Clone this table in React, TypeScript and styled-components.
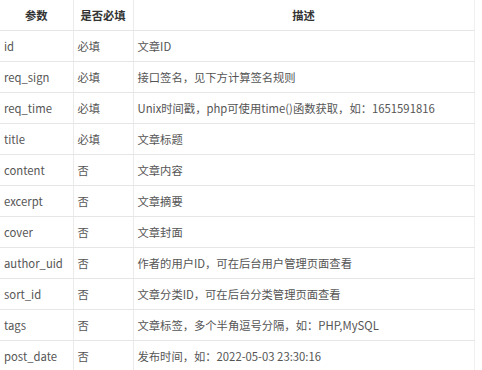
import React from "react";
import styled, { createGlobalStyle } from "styled-components";

const Global = createGlobalStyle`
  html, body { margin: 0; padding: 0; background: #fff; }
  body { font-family: "Noto Sans CJK SC", "Lato", sans-serif; }
`;

const Table = styled.table`
  border-collapse: collapse;
  width: 474px;
  table-layout: fixed;
  font-size: 11.3px;
  color: #555;
`;

const Th = styled.th<{ $w: number }>`
  width: ${(p) => p.$w}px;
  height: 30px;
  padding: 0 2px;
  box-sizing: border-box;
  font-weight: bold;
  color: #333;
  text-align: center;
  white-space: nowrap;
  border-right: 1px solid #ebebeb;
  border-bottom: 1px solid #e6e6e6;
  &:last-child { border-right: 1px solid #f0f0f0; }
`;

const Td = styled.td`
  height: 31px;
  padding: 0 4px;
  box-sizing: border-box;
  white-space: nowrap;
  border-right: 1px solid #ebebeb;
  border-bottom: 1px solid #e6e6e6;
  &:last-child { border-right: 1px solid #f0f0f0; }
`;

const rows: [string, string, string][] = [
  ["id", "必填", "文章ID"],
  ["req_sign", "必填", "接口签名，见下方计算签名规则"],
  ["req_time", "必填", "Unix时间戳，php可使用time()函数获取，如：1651591816"],
  ["title", "必填", "文章标题"],
  ["content", "否", "文章内容"],
  ["excerpt", "否", "文章摘要"],
  ["cover", "否", "文章封面"],
  ["author_uid", "否", "作者的用户ID，可在后台用户管理页面查看"],
  ["sort_id", "否", "文章分类ID，可在后台分类管理页面查看"],
  ["tags", "否", "文章标签，多个半角逗号分隔，如：PHP,MySQL"],
  ["post_date", "否", "发布时间，如：2022-05-03 23:30:16"],
];

export default function App() {
  return (
    <>
      <Global />
      <Table>
        <thead>
          <tr>
            <Th $w={73}>参数</Th>
            <Th $w={60}>是否必填</Th>
            <Th $w={341}>描述</Th>
          </tr>
        </thead>
        <tbody>
          {rows.map((r) => (
            <tr key={r[0]}>
              <Td>{r[0]}</Td>
              <Td>{r[1]}</Td>
              <Td>{r[2]}</Td>
            </tr>
          ))}
        </tbody>
      </Table>
    </>
  );
}
